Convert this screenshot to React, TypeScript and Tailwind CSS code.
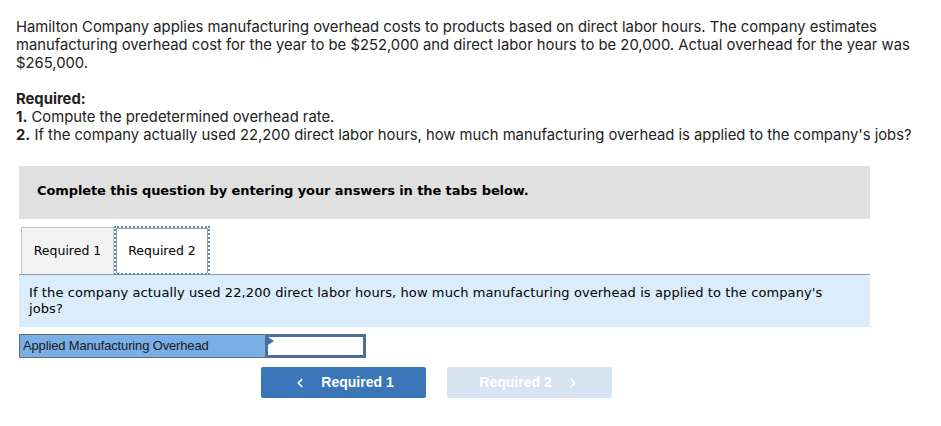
import { ChevronLeft, ChevronRight } from 'lucide-react'

const sans = { fontFamily: 'Inter, "Open Sans", sans-serif' }
const verdana = { fontFamily: '"DejaVu Sans", Verdana, sans-serif' }
const arial = { fontFamily: '"Liberation Sans", Arial, sans-serif' }

export default function App() {
  return (
    <div className="w-[941px] h-[426px] bg-white text-[#222]">
      {/* problem text */}
      <div className="pl-4 pr-6 pt-[18px] text-[14.8px] leading-[18px]" style={sans}>
        <p>
          Hamilton Company applies manufacturing overhead costs to products based on direct labor hours. The company estimates
          manufacturing overhead cost for the year to be $252,000 and direct labor hours to be 20,000. Actual overhead for the year was
          $265,000.
        </p>
        <p className="mt-[18px] font-bold">Required:</p>
        <p>
          <span className="font-bold">1.</span> Compute the predetermined overhead rate.
        </p>
        <p>
          <span className="font-bold">2.</span> If the company actually used 22,200 direct labor hours, how much manufacturing overhead is applied to the company's jobs?
        </p>
      </div>

      <div className="ml-[19px] w-[851px]">
        <div className="mt-[22px] h-[53px] bg-[#e0e0e0] pl-[18px] pt-[11px]">
          <span className="text-[13px] font-bold text-black tracking-[-0.1px]" style={verdana}>
            Complete this question by entering your answers in the tabs below.
          </span>
        </div>

        {/* tabs */}
        <div className="mt-[7px] flex items-end border-b border-[#999] pl-[2px]" style={verdana}>
          <div className="h-[47px] w-[93px] bg-[#f3f3f3] border border-b-0 border-[#c4c4c4] flex items-center justify-center text-[12.5px] text-black">
            Required 1
          </div>
          <div className="h-[49px] w-[96px] -mb-px border-2 border-dotted border-[#5b8ac6] flex">
            <div className="flex-1 bg-white border border-b-0 border-[#999] flex items-center justify-center text-[12.5px] text-black">
              Required 2
            </div>
          </div>
        </div>

        <div className="h-[52px] bg-[#dbedfa] pl-[10px] pr-[30px] pt-[10px] text-[13px] leading-[16px] text-black tracking-[0.1px]" style={verdana}>
          If the company actually used 22,200 direct labor hours, how much manufacturing overhead is applied to the company's jobs?
        </div>

        <div className="mt-[7px] flex w-[347px] h-[24px] border border-[#6b6b6b]" style={arial}>
          <div className="w-[246px] bg-[#7aaee6] border-r border-[#6b6b6b] flex items-center pl-[3px] text-[13px] tracking-[-0.15px] text-[#1a1a1a]">
            Applied Manufacturing Overhead
          </div>
          <div className="relative flex-1 bg-white border-2 border-[#3c6fb3]">
            <svg className="absolute left-0 top-0" width="6" height="8" viewBox="0 0 6 8">
              <path d="M0 0 L6 4 L0 8 Z" fill="#3c6fb3" />
            </svg>
          </div>
        </div>

        <div className="mt-[9px] flex gap-[21px] pl-[242px]" style={arial}>
          <div className="w-[165px] h-[31px] rounded-[2px] bg-[#3b76b8] text-white flex items-center justify-center gap-[14px] text-[14px] font-bold">
            <ChevronLeft size={14} strokeWidth={3} />
            <span>Required 1</span>
          </div>
          <div className="w-[165px] h-[31px] rounded-[2px] bg-[#d8e4f1] text-white flex items-center justify-center gap-[14px] text-[14px] font-bold">
            <span>Required 2</span>
            <ChevronRight size={14} strokeWidth={3} />
          </div>
        </div>
      </div>
    </div>
  )
}
